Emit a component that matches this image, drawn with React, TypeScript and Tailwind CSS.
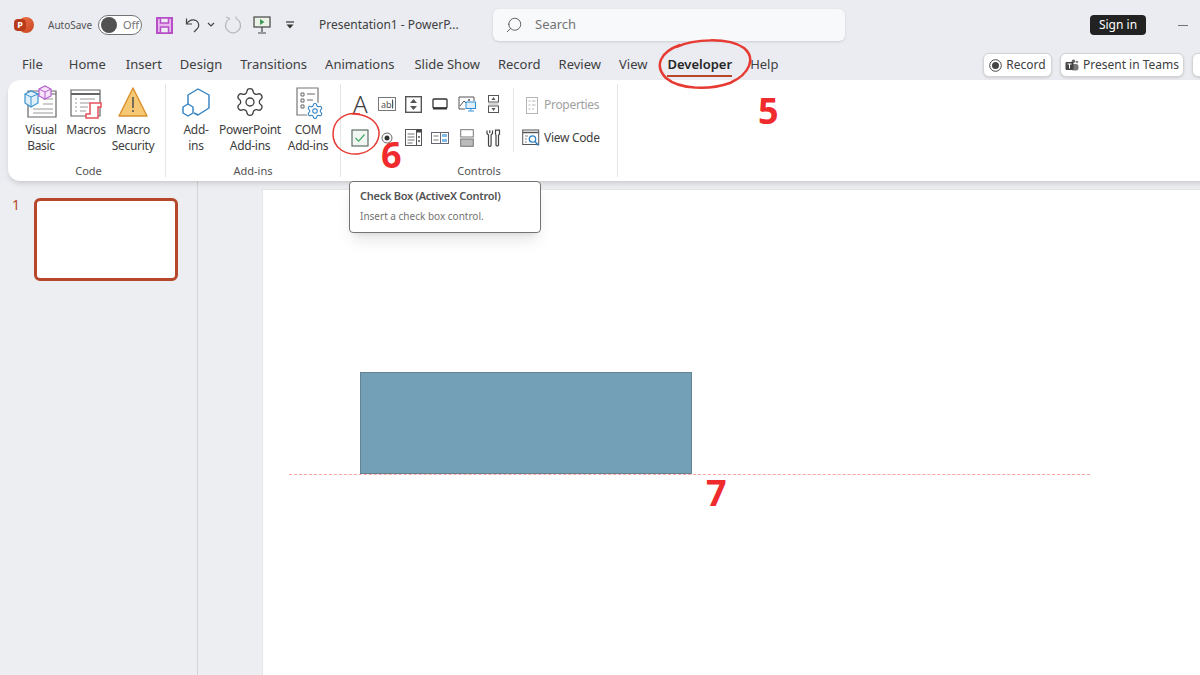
import { Search, Settings } from "lucide-react";
import type { ReactNode } from "react";

const tabs = [
  { name: "File", className: "ml-5.5" },
  { name: "Home", className: "ml-6.5" },
  { name: "Insert", className: "ml-5" },
  { name: "Design", className: "ml-4.5" },
  { name: "Transitions", className: "ml-4.5" },
  { name: "Animations", className: "ml-4.5" },
  { name: "Slide Show", className: "ml-5" },
  { name: "Record", className: "ml-4.5" },
  { name: "Review", className: "ml-4.5" },
  { name: "View", className: "ml-4.5" },
];

function RibbonButton({ icon, lines, className }: { icon: ReactNode; lines: string[]; className: string }) {
  return (
    <div className={`flex flex-col items-center ${className}`}>
      <div className="flex h-9 items-center justify-center">{icon}</div>
      <div className="mt-0.5 text-center text-xs leading-4 tracking-tight text-neutral-700">
        {lines.map((line) => (
          <div key={line} className="whitespace-nowrap">
            {line}
          </div>
        ))}
      </div>
    </div>
  );
}

function Divider() {
  return <div className="my-1 w-px bg-neutral-200" />;
}

function GroupLabel({ children }: { children: ReactNode }) {
  return <div className="mt-auto text-center text-[11px] leading-4 text-neutral-600">{children}</div>;
}

function VisualBasicIcon() {
  return (
    <svg width="34" height="34" viewBox="0 0 34 34" fill="none">
      <path d="M4 6h28v26H4z" fill="#fff" stroke="#666" strokeWidth="1.2" />
      <path d="M4 9h28" stroke="#666" />
      <path d="M19 14h10M19 19h10M9 24h20M9 28h20" stroke="#999" />
      <path d="M1 9l6-3 7 3v9l-7 4-6-4z" fill="#dff0fb" stroke="#3d93d1" strokeWidth="1.2" />
      <path d="M1 9l6 3 7-3M7 12v10" stroke="#3d93d1" />
      <path d="M15 4l6-3 6 3v7l-6 3-6-3z" fill="#f6e3f8" stroke="#b55fd0" strokeWidth="1.2" />
      <path d="M15 4l6 3 6-3M21 7v7" stroke="#b55fd0" />
    </svg>
  );
}

function MacrosIcon() {
  return (
    <svg width="34" height="34" viewBox="0 0 34 34" fill="none">
      <path d="M2 5h29v26H2z" fill="#fff" stroke="#666" strokeWidth="1.2" />
      <path d="M2 9h29" stroke="#666" strokeWidth="2" />
      <path d="M6 14h2M11 14h15M6 18h2M11 18h10M6 22h2M11 22h8M6 26h2M11 26h6" stroke="#999" />
      <path d="M21 18h11v4h-3v11H17v-4h4z" fill="#fff" stroke="#e8505b" strokeWidth="1.5" />
    </svg>
  );
}

function WarningIcon() {
  return (
    <svg width="32" height="32" viewBox="0 0 32 32" fill="none">
      <path d="M16 2l14 28H2z" fill="#f7c873" stroke="#d8902e" strokeWidth="1.4" strokeLinejoin="round" />
      <path d="M16 11v11" stroke="#555" strokeWidth="1.6" />
      <path d="M16 24v2" stroke="#555" strokeWidth="1.6" />
    </svg>
  );
}

function AddInsIcon() {
  return (
    <svg width="32" height="32" viewBox="0 0 32 32" fill="none">
      <path d="M8 18V9l10-6 11 6v13l-11 7-4-2" stroke="#2f7fc1" strokeWidth="1.4" strokeLinejoin="round" />
      <path d="M8 18l5 3v6l-5 3-5-3v-6z" stroke="#2f7fc1" strokeWidth="1.4" strokeLinejoin="round" />
    </svg>
  );
}

function ComIcon() {
  return (
    <div className="relative h-9 w-8">
      <svg width="26" height="32" viewBox="0 0 26 32" fill="none" className="absolute left-1 top-0">
        <path d="M1 4h21v27H1z" fill="#fff" stroke="#777" strokeWidth="1.2" />
        <path d="M5 9h3v3H5zM5 15h3v3H5zM5 21h3v3H5z" stroke="#666" />
        <path d="M11 10h8M11 16h6" stroke="#666" />
      </svg>
      <div className="absolute bottom-0 right-0 rounded-full bg-white">
        <Settings size={18} strokeWidth={1.4} color="#2f7fc1" />
      </div>
    </div>
  );
}

function TextBoxIcon() {
  return (
    <svg width="18" height="14" viewBox="0 0 18 14">
      <rect x="0.5" y="0.5" width="17" height="13" fill="#fff" stroke="#777" />
      <text x="3" y="10.5" fontSize="9" fill="#555" fontFamily="Noto Sans, sans-serif">
        abl
      </text>
      <path d="M14.5 2.5v9" stroke="#555" />
    </svg>
  );
}

function SpinIcon() {
  return (
    <svg width="17" height="17" viewBox="0 0 17 17" fill="none">
      <rect x="0.7" y="0.7" width="15.6" height="15.6" stroke="#555" strokeWidth="1.4" />
      <path d="M8.5 3l3.5 4H5zM8.5 14L5 10h7z" fill="#555" />
    </svg>
  );
}

function ButtonIcon() {
  return (
    <svg width="16" height="12" viewBox="0 0 16 12" fill="none">
      <rect x="1" y="1" width="14" height="9" rx="1" stroke="#333" strokeWidth="1.3" />
      <path d="M1 10.5h14" stroke="#333" strokeWidth="2" />
    </svg>
  );
}

function ImageIcon() {
  return (
    <svg width="18" height="16" viewBox="0 0 18 16" fill="none">
      <path d="M1 1h15v4M1 1v12h6" stroke="#555" />
      <path d="M2 10l4-5 3 3" stroke="#555" />
      <circle cx="11" cy="4" r="1" fill="#555" />
      <rect x="8" y="6" width="9.5" height="6.5" fill="#dff0fb" stroke="#2f8fd6" />
      <path d="M12.8 12.5v2M10 15h6" stroke="#2f8fd6" />
    </svg>
  );
}

function ScrollIcon() {
  return (
    <svg width="11" height="18" viewBox="0 0 11 18" fill="none">
      <rect x="0.5" y="0.5" width="10" height="6.5" stroke="#555" />
      <rect x="0.5" y="11" width="10" height="6.5" stroke="#555" />
      <path d="M5.5 2l2 3h-4zM5.5 16l-2-3h4z" fill="#555" />
      <path d="M0.5 9h10" stroke="#aaa" />
    </svg>
  );
}

function CheckBoxIcon() {
  return (
    <svg width="18" height="18" viewBox="0 0 18 18" fill="none">
      <rect x="1" y="1" width="16" height="16" fill="#f2f6f2" stroke="#5f6f66" strokeWidth="1.2" />
      <path d="M4.5 9l3.2 3.2L13.5 5.5" stroke="#3fa864" strokeWidth="1.2" />
    </svg>
  );
}

function RadioIcon() {
  return (
    <svg width="12" height="12" viewBox="0 0 12 12" fill="none">
      <circle cx="6" cy="6" r="5" stroke="#666" />
      <circle cx="6" cy="6" r="2.5" fill="#333" />
    </svg>
  );
}

function ListIcon() {
  return (
    <svg width="17" height="17" viewBox="0 0 17 17" fill="none">
      <rect x="0.5" y="0.5" width="16" height="16" fill="#fff" stroke="#555" />
      <path d="M11.5 0.5v16" stroke="#555" />
      <path d="M11.5 0.5h5v3h-5z" fill="#444" />
      <path d="M2.5 5h7M2.5 8h7M2.5 11h7M2.5 14h5" stroke="#777" />
      <path d="M13 8h2M13 12h2" stroke="#555" strokeWidth="1.5" />
    </svg>
  );
}

function ComboIcon() {
  return (
    <svg width="18" height="12" viewBox="0 0 18 12" fill="none">
      <rect x="0.5" y="0.5" width="17" height="11" fill="#fff" stroke="#667" />
      <path d="M9.5 0.5v11" stroke="#667" />
      <path d="M2.5 4h5M2.5 8h5" stroke="#777" />
      <path d="M11 2h5v3h-5zM11 7h5v3h-5z" fill="#7fbde8" />
    </svg>
  );
}

function ToggleBoxIcon() {
  return (
    <svg width="14" height="18" viewBox="0 0 14 18" fill="none">
      <rect x="0.7" y="0.7" width="12.6" height="7.3" fill="#fff" stroke="#777" />
      <rect x="0.7" y="10" width="12.6" height="7.3" fill="#bbb" stroke="#777" />
    </svg>
  );
}

function ToolsIcon() {
  return (
    <svg width="15" height="18" viewBox="0 0 15 18" fill="none" stroke="#444" strokeWidth="1.2">
      <path d="M1 1.5v3l1.5 1.5V16a1.3 1.3 0 0 0 2.6 0V6l1.4-1.5v-3M3.8 1.2v3" />
      <path d="M9.5 1.2h4v4l-1 1V16a1.3 1.3 0 0 1-2.5 0V6.2l-.5-1z" />
    </svg>
  );
}

function PropertiesIcon() {
  return (
    <svg width="12" height="17" viewBox="0 0 12 17" fill="none" stroke="#b5b5b5">
      <rect x="0.5" y="0.5" width="11" height="16" />
      <path d="M2.5 4h2M6 4h3.5M2.5 8h2M6 8h3.5M2.5 12h2M6 12h2" />
    </svg>
  );
}

function ViewCodeIcon() {
  return (
    <svg width="18" height="18" viewBox="0 0 18 18" fill="none">
      <rect x="0.7" y="1" width="16" height="14.5" fill="#fff" stroke="#555" />
      <path d="M0.7 3.5h16" stroke="#555" strokeWidth="1.5" />
      <path d="M3 7h3M3 10h2M3 13h2" stroke="#888" />
      <circle cx="10.5" cy="10" r="3.2" fill="#fff" stroke="#2f7fc1" strokeWidth="1.3" />
      <path d="M13 12.5l3.5 4" stroke="#2f7fc1" strokeWidth="1.5" />
    </svg>
  );
}

function RecordIcon() {
  return (
    <svg width="13" height="13" viewBox="0 0 13 13" fill="none">
      <circle cx="6.5" cy="6.5" r="5.8" stroke="#444" />
      <circle cx="6.5" cy="6.5" r="3.5" fill="#444" />
    </svg>
  );
}

function TeamsIcon() {
  return (
    <svg width="14" height="13" viewBox="0 0 14 13">
      <circle cx="8.5" cy="2.2" r="1.8" fill="#666" />
      <circle cx="12" cy="3" r="1.3" fill="#888" />
      <rect x="6" y="5" width="7.5" height="6.5" rx="2.5" fill="#777" />
      <rect x="0.5" y="3" width="8" height="8" rx="1" fill="#444" />
      <path d="M2.5 5h4M4.5 5v4.5" stroke="#fff" />
    </svg>
  );
}

function ControlCell({ children }: { children: ReactNode }) {
  return <div className="flex h-8 items-center justify-center">{children}</div>;
}

function ToolbarIcons() {
  return (
    <>
      <svg width="17" height="17" viewBox="0 0 17 17" className="ml-3.5 shrink-0">
        <rect x="1" y="1" width="15" height="15" fill="#e9b5ee" stroke="#b64fc8" strokeWidth="2" />
        <rect x="4.5" y="1" width="8" height="5" fill="#eceef3" stroke="#b64fc8" strokeWidth="1.5" />
        <rect x="4.5" y="10" width="8" height="6" fill="#eceef3" stroke="#b64fc8" strokeWidth="1.5" />
      </svg>
      <svg width="16" height="16" viewBox="0 0 16 16" fill="none" stroke="#444" strokeWidth="1.2" className="ml-3 shrink-0">
        <path d="M1.5 1.5v5.5H7" />
        <path d="M1.5 7C4 3 8 2 11 3.5c3.5 2 3.5 6.5 1 8.5l-3 3" />
      </svg>
      <svg width="8" height="6" viewBox="0 0 8 6" fill="none" stroke="#444" strokeWidth="1.2" className="ml-1.5 shrink-0">
        <path d="M1 1l3 3 3-3" />
      </svg>
      <svg width="20" height="18" viewBox="0 0 20 18" fill="none" stroke="#b5b8bd" strokeWidth="1.2" className="ml-2 shrink-0">
        <path d="M7 2.5A7.5 7.5 0 1 0 13 2.5" />
        <path d="M7 2.5L3 1M13 2.5v-2" />
      </svg>
      <svg width="18" height="18" viewBox="0 0 18 18" fill="none" className="ml-2.5 shrink-0">
        <rect x="1" y="1" width="16" height="10" fill="#eaf3e6" stroke="#444" strokeWidth="1.2" />
        <path d="M7 3l4.5 3L7 9z" fill="#3f9a58" />
        <path d="M9 11v5M5 17h8" stroke="#444" strokeWidth="1.2" />
      </svg>
      <svg width="10" height="8" viewBox="0 0 10 8" className="ml-3.5 shrink-0">
        <path d="M1 1h8" stroke="#333" strokeWidth="1.2" />
        <path d="M1.5 3.5h7L5 7.5z" fill="#333" />
      </svg>
    </>
  );
}

export default function App() {
  return (
    <div
      className="relative h-[675px] w-[1200px] overflow-hidden bg-[#eaecf1] text-neutral-700"
      style={{ fontFamily: '"Noto Sans", sans-serif' }}
    >
      {/* title bar */}
      <div className="flex h-12 items-center pt-0.5">
        <div className="relative ml-3.5 h-5 w-5 shrink-0">
          <div className="absolute right-0 top-0.5 h-4 w-4 rounded-full bg-gradient-to-br from-[#f0764f] to-[#c9431f]" />
          <div className="absolute left-0 top-1 flex h-3 w-3 items-center justify-center rounded-sm bg-[#b83b1a] text-[9px] font-bold text-white">
            P
          </div>
        </div>
        <div className="ml-3.5 w-11 shrink-0 whitespace-nowrap text-[10px] text-neutral-600">AutoSave</div>
        <div className="ml-1.5 flex h-5 w-11 shrink-0 items-center gap-1.5 rounded-full border border-neutral-500 bg-white pl-0.5">
          <div className="h-4 w-4 rounded-full bg-neutral-600" />
          <span className="text-[11px] text-neutral-500">Off</span>
        </div>
        <ToolbarIcons />
        <div className="ml-6 w-40 shrink-0 whitespace-nowrap text-xs text-neutral-700">Presentation1 - PowerP...</div>
        <div className="ml-3.5 flex h-8 w-88 shrink-0 items-center rounded-md bg-[#f8f9fb] pl-3 shadow-sm">
          <Search size={18} strokeWidth={1.2} className="-scale-x-100 text-neutral-600" />
          <span className="ml-3 text-[13px] text-neutral-500">Search</span>
        </div>
        <div className="ml-auto flex shrink-0 items-center gap-8 pr-3">
          <div className="flex h-5 w-14 items-center justify-center rounded-sm bg-[#222] text-xs text-white">Sign in</div>
          <div className="h-px w-2.5 bg-neutral-500" />
        </div>
      </div>

      {/* tabs */}
      <div className="flex h-8 items-center whitespace-nowrap pt-0.5 text-[13px] text-neutral-700">
        {tabs.map((tab) => (
          <div key={tab.name} className={tab.className}>
            {tab.name}
          </div>
        ))}
        <div className="relative ml-5 font-semibold text-neutral-800">
          Developer
          <div className="absolute inset-x-0 -bottom-0.5 h-0.5 bg-[#b7472a]" />
        </div>
        <div className="ml-4.5">Help</div>
        <div className="-mr-10 ml-auto flex shrink-0 items-center gap-2 text-xs">
          <div className="flex h-6 w-[69px] items-center justify-center gap-1 rounded-md border border-neutral-300 bg-white shadow-sm">
            <RecordIcon />
            Record
          </div>
          <div className="flex h-6 w-[124px] items-center justify-center gap-1 rounded-md border border-neutral-300 bg-white shadow-sm">
            <TeamsIcon />
            Present in Teams
          </div>
          <div className="h-6 w-12 rounded-md border border-neutral-300 bg-white shadow-sm" />
        </div>
      </div>

      {/* ribbon */}
      <div className="relative z-10 -mr-4 ml-2 flex h-[101px] rounded-l-xl bg-white shadow-md">
        <div className="flex w-[157px] flex-col pb-0.5 pl-1 pt-1">
          <div className="ml-1 flex gap-px pl-px">
            <RibbonButton icon={<VisualBasicIcon />} lines={["Visual", "Basic"]} className="w-12" />
            <RibbonButton icon={<MacrosIcon />} lines={["Macros"]} className="w-10" />
            <RibbonButton icon={<WarningIcon />} lines={["Macro", "Security"]} className="ml-0.5 w-12" />
          </div>
          <GroupLabel>Code</GroupLabel>
        </div>
        <Divider />
        <div className="flex w-[174px] flex-col pb-0.5 pt-1">
          <div className="flex pl-2.5">
            <RibbonButton icon={<AddInsIcon />} lines={["Add-", "ins"]} className="w-10" />
            <RibbonButton icon={<Settings size={32} strokeWidth={1} className="text-neutral-700" />} lines={["PowerPoint", "Add-ins"]} className="ml-0.5 w-16" />
            <RibbonButton icon={<ComIcon />} lines={["COM", "Add-ins"]} className="w-13" />
          </div>
          <GroupLabel>Add-ins</GroupLabel>
        </div>
        <Divider />
        <div className="flex w-69 flex-col pb-0.5 pt-2">
          <div className="flex">
            <div className="ml-1.5 grid w-40 grid-cols-6 gap-y-px">
              <ControlCell>
                <span className="text-2xl font-light leading-none text-neutral-700">A</span>
              </ControlCell>
              <ControlCell><TextBoxIcon /></ControlCell>
              <ControlCell><SpinIcon /></ControlCell>
              <ControlCell><ButtonIcon /></ControlCell>
              <ControlCell><ImageIcon /></ControlCell>
              <ControlCell><ScrollIcon /></ControlCell>
              <ControlCell><CheckBoxIcon /></ControlCell>
              <ControlCell><RadioIcon /></ControlCell>
              <ControlCell><ListIcon /></ControlCell>
              <ControlCell><ComboIcon /></ControlCell>
              <ControlCell><ToggleBoxIcon /></ControlCell>
              <ControlCell><ToolsIcon /></ControlCell>
            </div>
            <div className="ml-1.5 h-16 w-px bg-neutral-200" />
            <div className="ml-2 flex flex-col gap-px pt-px text-xs tracking-tight">
              <div className="flex h-8 items-center gap-1.5 pl-1 text-neutral-400">
                <PropertiesIcon />
                Properties
              </div>
              <div className="flex h-8 items-center gap-1 text-neutral-700">
                <ViewCodeIcon />
                View Code
              </div>
            </div>
          </div>
          <GroupLabel>Controls</GroupLabel>
        </div>
        <Divider />
      </div>

      {/* thumbnails and slide */}
      <div className="flex h-[494px]">
        <div className="flex w-[198px] shrink-0 gap-3 border-r border-neutral-300 bg-[#eceef1] pl-3 pt-4">
          <div className="w-2.5 text-sm leading-4 text-[#b7472a]">1</div>
          <div className="mt-px h-[83px] w-36 rounded-md border-[3px] border-[#b7472a] bg-white" />
        </div>
        <div className="flex flex-1 bg-[#eceef1] pl-16 pt-2">
          <div className="relative flex-1 border-l border-t border-neutral-200 bg-white">
            <div className="absolute left-[26px] top-[284px] w-[801px] border-t border-dashed border-red-300" />
            <div className="absolute left-[97px] top-[182px] h-[102px] w-[332px] border border-[#64828f] bg-[#73a0b6]" />
          </div>
        </div>
      </div>

      {/* tooltip */}
      <div className="absolute left-[349px] top-[181px] z-20 h-[52px] w-[192px] rounded border border-neutral-500 bg-white px-2.5 pt-1.5 shadow-lg">
        <div className="text-[11px] font-semibold leading-4 tracking-tight text-neutral-600">Check Box (ActiveX Control)</div>
        <div className="mt-1 text-[10px] leading-4 text-neutral-500">Insert a check box control.</div>
      </div>

      {/* red annotations */}
      <svg width="100" height="54" viewBox="0 0 100 54" fill="none" className="absolute left-[656px] top-[38px] z-20">
        <path
          d="M20 9C38 1 72 -1 88 10C100 20 94 36 74 45C54 52 24 52 10 40C-2 28 4 14 24 7"
          stroke="#e63a33"
          strokeWidth="2.5"
        />
      </svg>
      <svg width="52" height="46" viewBox="0 0 52 46" fill="none" className="absolute left-[330px] top-[111px] z-20">
        <path d="M30 3C14 0 3 10 3 23C3 36 14 44 28 43C42 41 50 31 49 20C47 9 36 3 22 3" stroke="#e63a33" strokeWidth="1.5" />
      </svg>
      <div className="absolute left-[758px] top-[91px] z-20 text-4xl font-bold text-[#ef2b2d]" style={{ fontFamily: '"Open Sans", sans-serif' }}>
        5
      </div>
      <div className="absolute left-[381px] top-[135px] z-20 text-4xl font-bold text-[#ef2b2d]" style={{ fontFamily: '"Open Sans", sans-serif' }}>
        6
      </div>
      <div className="absolute left-[706px] top-[473px] z-20 text-4xl font-bold text-[#ef2b2d]" style={{ fontFamily: '"Open Sans", sans-serif' }}>
        7
      </div>
    </div>
  );
}
